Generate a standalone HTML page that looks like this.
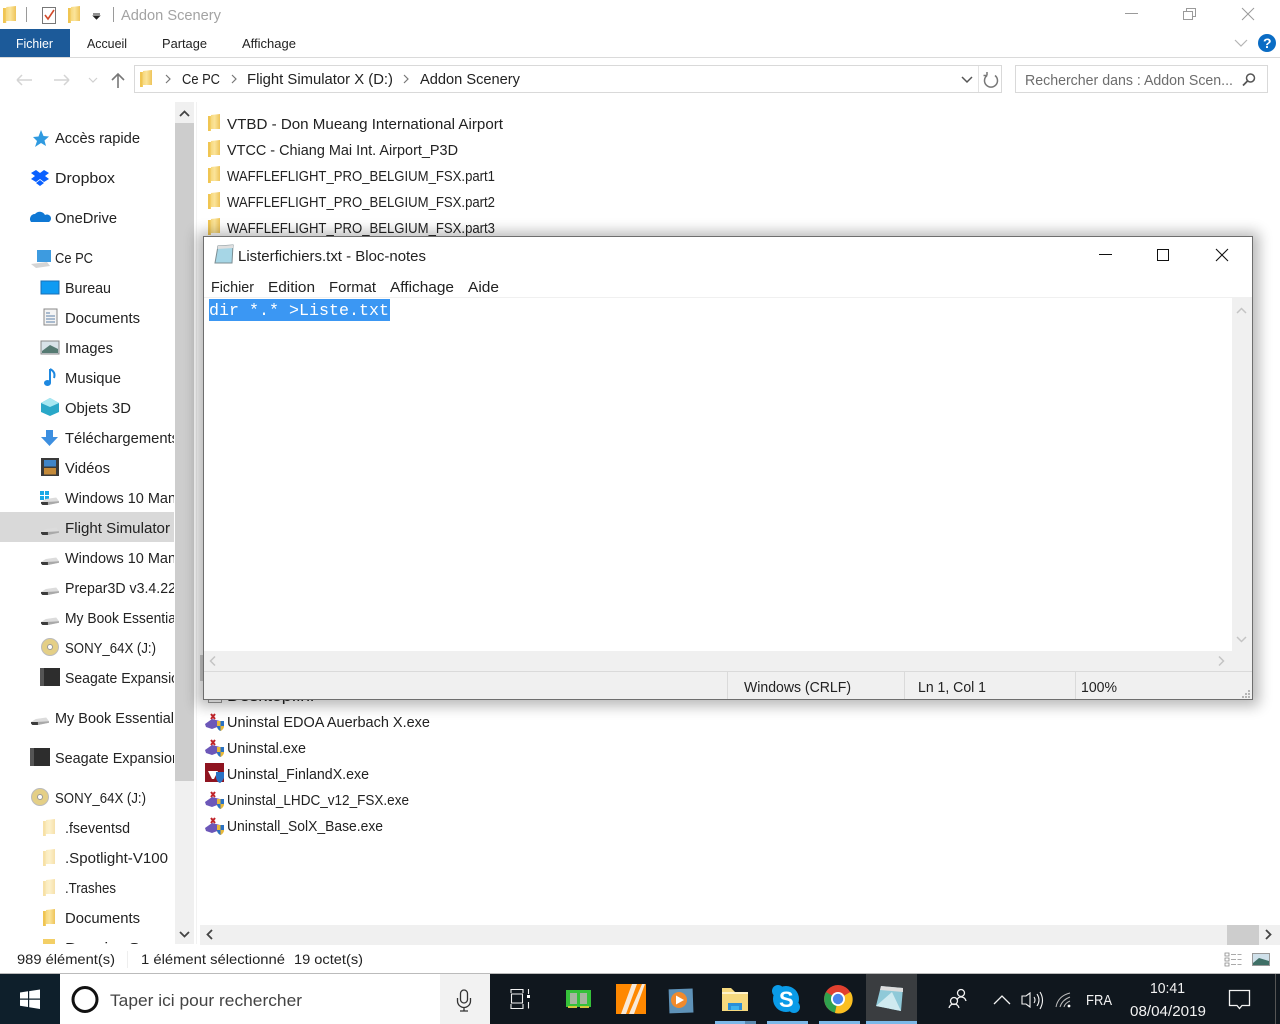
<!DOCTYPE html>
<html lang="fr"><head><meta charset="utf-8"><title>Addon Scenery</title>
<style>
html,body{margin:0;padding:0;background:#fff;width:1280px;height:1024px;overflow:hidden}
svg{display:block}
text{font-family:"Liberation Sans",sans-serif;font-size:14.5px;fill:#222}
.m{font-size:13px}
.w{fill:#f2f2f2}
</style></head><body>
<svg xmlns="http://www.w3.org/2000/svg" width="1280" height="1024" viewBox="0 0 1280 1024">
<defs>
<linearGradient id="fg" x1="0" x2="1" y1="0" y2="0"><stop offset="0" stop-color="#f3cf66"/><stop offset=".55" stop-color="#fbe49a"/><stop offset="1" stop-color="#eec45a"/></linearGradient>
<symbol id="folder" viewBox="0 0 12 17" preserveAspectRatio="none" overflow="visible"><path d="M0 2 L3 2 L3 1 L12 0 L12 15 L3 15 L3 17 L0 17Z" fill="url(#fg)"/><path d="M0 2 L2.500 2 L2.500 17 L0 17Z" fill="#f0c552"/></symbol>
<symbol id="drive" viewBox="0 0 26 12" preserveAspectRatio="none" overflow="visible"><path d="M0 8 L7 4 L22 2 L26 7 L26 9 L10 12 L2 12 L0 10Z" fill="#dcdcdc"/><path d="M7 8 L26 7 L26 9 L10 12Z" fill="#a9a9a9"/><path d="M0 8 L10 8 L10 12 L2 12 L0 10Z" fill="#3c3c3c"/></symbol>
<symbol id="unin" viewBox="0 0 20 18" overflow="visible"><path d="M0 11 L7 6 L15 8 L15 13 L7 16 L1 14Z" fill="#6c57b8"/><path d="M6 1 L10 6 M10 1 L6 6" stroke="#c0242a" stroke-width="2"/><path d="M12 8 L19 8 L19 14 Q18 17 15.500 18 Q13 17 12 14Z" fill="#e9b93a"/><path d="M15.500 8 L19 8 L19 13 L15.500 13Z M12 13 L15.500 13 L15.500 18 Q13 17 12 14Z" fill="#2a72c4"/></symbol>
<clipPath id="nav"><rect x="0" y="100" width="174" height="844"/></clipPath>
<filter id="sh" x="-5%" y="-5%" width="110%" height="110%"><feGaussianBlur stdDeviation="7"/></filter>
</defs>

<rect width="1280" height="1024" fill="#fff"/>

<!-- title bar -->
<use href="#folder" x="3" y="6" width="13" height="17"/>
<rect x="26" y="7" width="1" height="15" fill="#9a9a9a"/>
<path d="M42.500 7.500H55.500V23.500H42.500Z" fill="#fff" stroke="#777"/>
<path d="M45 15L48 19L54 10" fill="none" stroke="#d2492a" stroke-width="1.600"/>
<use href="#folder" x="68" y="6" width="12" height="17"/>
<path d="M93 14H100M93.500 16H99.500L96.500 19Z" stroke="#222" fill="#222"/>
<rect x="113" y="7" width="1" height="15" fill="#9a9a9a"/>
<text x="121" y="20" style="fill:#a3a3a3" textLength="100" lengthAdjust="spacingAndGlyphs">Addon Scenery</text>
<path d="M1125 13.500H1138" stroke="#9a9a9a"/>
<path d="M1183.500 11.500H1192.500V19.500H1183.500ZM1186.500 11.500V8.500H1195.500V16.500H1192.500" fill="none" stroke="#9a9a9a"/>
<path d="M1242 8L1254 20M1254 8L1242 20" stroke="#9a9a9a"/>

<!-- ribbon -->
<rect x="0" y="29" width="70" height="28" fill="#1c5a99"/>
<text class="m" x="16" y="48" style="fill:#fff" textLength="37" lengthAdjust="spacingAndGlyphs">Fichier</text>
<text class="m" x="87" y="48" textLength="40" lengthAdjust="spacingAndGlyphs">Accueil</text>
<text class="m" x="162" y="48" textLength="45" lengthAdjust="spacingAndGlyphs">Partage</text>
<text class="m" x="242" y="48" textLength="54" lengthAdjust="spacingAndGlyphs">Affichage</text>
<rect x="0" y="57" width="1280" height="1" fill="#dadada"/>
<path d="M1235 40L1241 46L1247 40" fill="none" stroke="#b5b5b5" stroke-width="1.200"/>
<circle cx="1267" cy="43" r="9" fill="#0a6cc4"/>
<text x="1263" y="48" style="fill:#fff;font-weight:bold;font-size:14px">?</text>

<!-- nav bar -->
<path d="M17 80H32M17 80L22 75M17 80L22 85" fill="none" stroke="#d4d4d4" stroke-width="1.500"/>
<path d="M54 80H69M69 80L64 75M69 80L64 85" fill="none" stroke="#d4d4d4" stroke-width="1.500"/>
<path d="M89 78L93 82L97 78" fill="none" stroke="#d0d0d0" stroke-width="1.200"/>
<path d="M118 88V74M112 80L118 74L124 80" fill="none" stroke="#777" stroke-width="1.600"/>
<rect x="134.500" y="65.500" width="867" height="27" fill="#fff" stroke="#d9d9d9"/>
<rect x="978" y="66" width="1" height="26" fill="#e3e3e3"/>
<use href="#folder" x="140" y="70" width="12" height="17"/>
<path d="M166 75L170 79L166 83M232 75L236 79L232 83M404 75L408 79L404 83" fill="none" stroke="#777" stroke-width="1.200"/>
<text x="182" y="84" style="font-size:15px" textLength="38" lengthAdjust="spacingAndGlyphs">Ce PC</text>
<text x="247" y="84" textLength="146" lengthAdjust="spacingAndGlyphs">Flight Simulator X (D:)</text>
<text x="420" y="84" textLength="100" lengthAdjust="spacingAndGlyphs">Addon Scenery</text>
<path d="M962 77L967 82L972 77" fill="none" stroke="#555" stroke-width="1.500"/>
<path d="M987 75.500A6.500 6.500 0 1 0 995 75.500M987 75.500V72M987 75.500H983.500" fill="none" stroke="#777" stroke-width="1.500"/>
<rect x="1015.500" y="65.500" width="252" height="27" fill="#fff" stroke="#d9d9d9"/>
<text x="1025" y="85" style="fill:#6d6d6d" textLength="208" lengthAdjust="spacingAndGlyphs">Rechercher dans : Addon Scen...</text>
<circle cx="1250.500" cy="78" r="4" fill="none" stroke="#555" stroke-width="1.500"/><path d="M1247.500 81L1243 85.500" stroke="#555" stroke-width="1.800"/>

<!-- sidebar -->
<rect x="0" y="512" width="174" height="30" fill="#d9d9d9"/>
<path d="M41 130L43.500 136L49 136.500L44.500 140.500L46 146L41 143L35 147L37 141L33 137L38.500 136.500Z" fill="#2f9ae0"/>
<path d="M31 173L36 170L40 173L44 170L49 173L45 176L49 179L44 182L40 179L36 182L31 179L35 176ZM36 183L40 180L44 183L40 186Z" fill="#0b61ff"/>
<path d="M31 222A5 5 0 0 1 35 214A6 6 0 0 1 45 215A4 4 0 0 1 49 222Z" fill="#0f78d4"/>
<path d="M37 250H51V262H37Z" fill="#3d9be0"/><path d="M31 264L47 262L50 266L36 268Z" fill="#d5d5d5"/>
<rect x="41" y="281" width="18" height="13" fill="#0f9bf2" stroke="#1a6fb5"/>
<rect x="44" y="309" width="13" height="16" fill="#f4f4f4" stroke="#888"/><path d="M46 313H50M46 316H55M46 319H55M46 322H55" stroke="#5b7fa8"/>
<rect x="41" y="341" width="18" height="13" fill="#d8e2e8" stroke="#888"/><path d="M42 351L50 345L58 349V353H42Z" fill="#557a72"/>
<path d="M50 369V383" stroke="#1e88e0" stroke-width="2"/><ellipse cx="47.500" cy="383" rx="3.500" ry="3" fill="#1e88e0"/><path d="M50 369Q56 372 54 378" fill="none" stroke="#1e88e0" stroke-width="2"/>
<path d="M50 398L59 403V412L50 416L41 412V403Z" fill="#29a8c8"/><path d="M41 403L50 398L59 403L50 407Z" fill="#a6e8f2"/>
<path d="M46 430H53V437H58L49.500 446L41 437H46Z" fill="#3d8fe0"/>
<rect x="41" y="458" width="18" height="18" fill="#3a3a3a"/><rect x="44" y="460" width="12" height="6.500" fill="#3f85c9"/><rect x="44" y="468" width="12" height="6.500" fill="#c48a3a"/>
<g fill="#19a9e6"><rect x="40" y="491" width="4" height="4"/><rect x="45" y="491" width="4" height="4"/><rect x="40" y="496" width="4" height="4"/><rect x="45" y="496" width="4" height="4"/></g>
<use href="#drive" x="41" y="496" width="18" height="9"/>
<use href="#drive" x="41" y="526" width="18" height="9"/>
<use href="#drive" x="41" y="556" width="18" height="9"/>
<use href="#drive" x="41" y="586" width="18" height="9"/>
<use href="#drive" x="41" y="616" width="18" height="9"/>
<circle cx="50" cy="647" r="8.500" fill="#e4cf86" stroke="#bbb"/><circle cx="50" cy="647" r="2.500" fill="#fff" stroke="#999"/>
<rect x="40" y="668" width="20" height="18" fill="#2d2d2d"/><rect x="40" y="668" width="4" height="18" fill="#555"/>
<use href="#drive" x="31" y="716" width="18" height="9"/>
<rect x="30" y="748" width="20" height="18" fill="#2d2d2d"/><rect x="30" y="748" width="4" height="18" fill="#555"/>
<circle cx="40" cy="797" r="8.500" fill="#e4cf86" stroke="#bbb"/><circle cx="40" cy="797" r="2.500" fill="#fff" stroke="#999"/>
<g opacity=".5"><use href="#folder" x="43" y="819" width="12" height="17"/><use href="#folder" x="43" y="849" width="12" height="17"/><use href="#folder" x="43" y="879" width="12" height="17"/></g>
<use href="#folder" x="43" y="909" width="12" height="17"/>
<rect x="43" y="939" width="12" height="5" fill="#f3cf66"/>

<g clip-path="url(#nav)">
<text x="55" y="143" textLength="85" lengthAdjust="spacingAndGlyphs">Accès rapide</text>
<text x="55" y="183" textLength="60" lengthAdjust="spacingAndGlyphs">Dropbox</text>
<text x="55" y="223" textLength="62" lengthAdjust="spacingAndGlyphs">OneDrive</text>
<text x="55" y="263" style="font-size:15px" textLength="38" lengthAdjust="spacingAndGlyphs">Ce PC</text>
<text x="65" y="293" textLength="46" lengthAdjust="spacingAndGlyphs">Bureau</text>
<text x="65" y="323" textLength="75" lengthAdjust="spacingAndGlyphs">Documents</text>
<text x="65" y="353" textLength="48" lengthAdjust="spacingAndGlyphs">Images</text>
<text x="65" y="383" textLength="56" lengthAdjust="spacingAndGlyphs">Musique</text>
<text x="65" y="413" textLength="66" lengthAdjust="spacingAndGlyphs">Objets 3D</text>
<text x="65" y="443" textLength="114" lengthAdjust="spacingAndGlyphs">Téléchargements</text>
<text x="65" y="473" textLength="45" lengthAdjust="spacingAndGlyphs">Vidéos</text>
<text x="65" y="503" textLength="111" lengthAdjust="spacingAndGlyphs">Windows 10 Man</text>
<text x="65" y="533" textLength="105" lengthAdjust="spacingAndGlyphs">Flight Simulator</text>
<text x="65" y="563" textLength="111" lengthAdjust="spacingAndGlyphs">Windows 10 Man</text>
<text x="65" y="593" textLength="111" lengthAdjust="spacingAndGlyphs">Prepar3D v3.4.22</text>
<text x="65" y="623" textLength="114" lengthAdjust="spacingAndGlyphs">My Book Essential</text>
<text x="65" y="653" textLength="91" lengthAdjust="spacingAndGlyphs">SONY_64X (J:)</text>
<text x="65" y="683" textLength="114" lengthAdjust="spacingAndGlyphs">Seagate Expansio</text>
<text x="55" y="723" textLength="119" lengthAdjust="spacingAndGlyphs">My Book Essential</text>
<text x="55" y="763" textLength="125" lengthAdjust="spacingAndGlyphs">Seagate Expansion</text>
<text x="55" y="803" textLength="91" lengthAdjust="spacingAndGlyphs">SONY_64X (J:)</text>
<text x="65" y="833" textLength="65" lengthAdjust="spacingAndGlyphs">.fseventsd</text>
<text x="65" y="863" textLength="103" lengthAdjust="spacingAndGlyphs">.Spotlight-V100</text>
<text x="65" y="893" textLength="51" lengthAdjust="spacingAndGlyphs">.Trashes</text>
<text x="65" y="923" textLength="75" lengthAdjust="spacingAndGlyphs">Documents</text>
<text x="65" y="953" textLength="75" lengthAdjust="spacingAndGlyphs">Dossier S</text>
</g>

<!-- sidebar scrollbar -->
<rect x="175" y="102" width="19" height="842" fill="#f0f0f0"/>
<rect x="175" y="123" width="19" height="658" fill="#cdcdcd"/>
<path d="M180 116L184.500 111.500L189 116M180 932L184.500 936.500L189 932" fill="none" stroke="#444" stroke-width="1.800"/>
<rect x="196" y="102" width="1" height="842" fill="#f2f2f2"/>

<!-- file list -->
<use href="#folder" x="208" y="114" width="12" height="17"/>
<use href="#folder" x="208" y="140" width="12" height="17"/>
<use href="#folder" x="208" y="166" width="12" height="17"/>
<use href="#folder" x="208" y="192" width="12" height="17"/>
<use href="#folder" x="208" y="218" width="12" height="17"/>
<text x="227" y="129" textLength="276" lengthAdjust="spacingAndGlyphs">VTBD - Don Mueang International Airport</text>
<text x="227" y="155" textLength="231" lengthAdjust="spacingAndGlyphs">VTCC - Chiang Mai Int. Airport_P3D</text>
<text x="227" y="181" style="font-size:15px" textLength="268" lengthAdjust="spacingAndGlyphs">WAFFLEFLIGHT_PRO_BELGIUM_FSX.part1</text>
<text x="227" y="207" style="font-size:15px" textLength="268" lengthAdjust="spacingAndGlyphs">WAFFLEFLIGHT_PRO_BELGIUM_FSX.part2</text>
<text x="227" y="233" style="font-size:15px" textLength="268" lengthAdjust="spacingAndGlyphs">WAFFLEFLIGHT_PRO_BELGIUM_FSX.part3</text>
<rect x="208.500" y="688.500" width="13" height="14" fill="#fff" stroke="#999"/>
<text x="227" y="701" textLength="87" lengthAdjust="spacingAndGlyphs">Desktop.ini</text>
<use href="#unin" x="205" y="713" width="20" height="18"/>
<use href="#unin" x="205" y="739" width="20" height="18"/>
<rect x="205" y="763" width="19" height="19" fill="#8f1420"/><path d="M208 771H218L214 779H212Z" fill="#fff"/><path d="M216 772L224 772L224 778Q222 782 220 783Q217 782 216 778Z" fill="#2a72c4"/>
<use href="#unin" x="205" y="791" width="20" height="18"/>
<use href="#unin" x="205" y="817" width="20" height="18"/>
<text x="227" y="727" textLength="203" lengthAdjust="spacingAndGlyphs">Uninstal EDOA Auerbach X.exe</text>
<text x="227" y="753" textLength="79" lengthAdjust="spacingAndGlyphs">Uninstal.exe</text>
<text x="227" y="779" textLength="142" lengthAdjust="spacingAndGlyphs">Uninstal_FinlandX.exe</text>
<text x="227" y="805" textLength="182" lengthAdjust="spacingAndGlyphs">Uninstal_LHDC_v12_FSX.exe</text>
<text x="227" y="831" textLength="156" lengthAdjust="spacingAndGlyphs">Uninstall_SolX_Base.exe</text>

<!-- horizontal scrollbar -->
<rect x="200" y="925" width="1080" height="20" fill="#f0f0f0"/>
<rect x="1227" y="925" width="32" height="20" fill="#cdcdcd"/>
<path d="M212 930L207.500 934.500L212 939M1266 930L1270.500 934.500L1266 939" fill="none" stroke="#444" stroke-width="1.800"/>

<!-- explorer status -->
<text class="m" x="17" y="964" style="font-size:14px" textLength="98" lengthAdjust="spacingAndGlyphs">989 élément(s)</text>
<rect x="127" y="951" width="1" height="17" fill="#eee"/>
<text class="m" x="141" y="964" style="font-size:14px" textLength="144" lengthAdjust="spacingAndGlyphs">1 élément sélectionné</text>
<text class="m" x="294" y="964" style="font-size:14px" textLength="69" lengthAdjust="spacingAndGlyphs">19 octet(s)</text>
<path d="M1225 953h4v3h-4zM1225 958h4v3h-4zM1225 963h4v3h-4z" fill="#fff" stroke="#888" stroke-width=".8"/>
<path d="M1231 954.500h5M1237.500 954.500h4M1231 959.500h5M1237.500 959.500h4M1231 964.500h5M1237.500 964.500h4" stroke="#aaa"/>
<rect x="1252.500" y="953.500" width="17" height="12" fill="#cfe0ea" stroke="#999"/><path d="M1253 963L1259 958L1269 961V965H1253Z" fill="#3f6f66"/>

<!-- notepad -->
<rect x="200" y="655" width="3" height="26" fill="#cdcdcd"/>
<rect x="197" y="232" width="1062" height="474" fill="#000" opacity=".28" filter="url(#sh)"/>
<rect x="203.500" y="236.500" width="1049" height="463" fill="#fff" stroke="#6e6e6e"/>
<path d="M218 246L233 245L232 263L215 263Z" fill="#a6d6e6" stroke="#7c8d92"/><path d="M218 246L233 245V248L217.500 249Z" fill="#dfdfdf"/>
<text x="238" y="261" textLength="188" lengthAdjust="spacingAndGlyphs">Listerfichiers.txt - Bloc-notes</text>
<path d="M1099 254.500H1112" stroke="#111"/>
<rect x="1157.500" y="249.500" width="11" height="11" fill="none" stroke="#111"/>
<path d="M1216 249L1228 261M1228 249L1216 261" stroke="#111" stroke-width="1.100"/>
<text x="211" y="292" textLength="43" lengthAdjust="spacingAndGlyphs">Fichier</text>
<text x="268" y="292" textLength="47" lengthAdjust="spacingAndGlyphs">Edition</text>
<text x="329" y="292" textLength="47" lengthAdjust="spacingAndGlyphs">Format</text>
<text x="390" y="292" textLength="64" lengthAdjust="spacingAndGlyphs">Affichage</text>
<text x="468" y="292" textLength="31" lengthAdjust="spacingAndGlyphs">Aide</text>
<rect x="204" y="297" width="1048" height="1" fill="#f0f0f0"/>
<rect x="209" y="299" width="181" height="22" fill="#3b97f3"/>
<text x="209" y="315" style="font-family:'Liberation Mono',monospace;font-size:17px;fill:#fff" textLength="180" lengthAdjust="spacingAndGlyphs">dir *.* &gt;Liste.txt</text>
<rect x="1232" y="298" width="20" height="353" fill="#f0f0f0"/>
<rect x="204" y="651" width="1048" height="48" fill="#f0f0f0"/>
<rect x="204" y="671" width="1048" height="1" fill="#dadada"/>
<path d="M1237 313L1241.500 308.500L1246 313M1237 637L1241.500 641.500L1246 637M215 656.500L210.500 661L215 665.500M1219 656.500L1223.500 661L1219 665.500" fill="none" stroke="#c4c4c4" stroke-width="1.500"/>
<rect x="727" y="672" width="1" height="27" fill="#dadada"/>
<rect x="904" y="672" width="1" height="27" fill="#dadada"/>
<rect x="1075" y="672" width="1" height="27" fill="#dadada"/>
<text x="744" y="692" textLength="107" lengthAdjust="spacingAndGlyphs">Windows (CRLF)</text>
<text x="918" y="692" textLength="68" lengthAdjust="spacingAndGlyphs">Ln 1, Col 1</text>
<text x="1081" y="692" textLength="36" lengthAdjust="spacingAndGlyphs">100%</text>
<path d="M1248 690h2v2h-2zM1245 693h2v2h-2zM1248 693h2v2h-2zM1242 696h2v2h-2zM1245 696h2v2h-2zM1248 696h2v2h-2z" fill="#b5b5b5"/>

<!-- taskbar -->
<rect x="0" y="973" width="1280" height="1" fill="#bbb"/>
<rect x="0" y="974" width="1280" height="50" fill="#10171e"/>
<rect x="0" y="974" width="60" height="50" fill="#0e1f2b"/>
<path d="M20 992.500L28 991.300V998.500H20ZM29.200 991.100L40 989.500V998.500H29.200ZM20 999.800H28V1007L20 1005.800ZM29.200 999.800H40V1009L29.200 1007.200Z" fill="#fff"/>
<rect x="60" y="974" width="380" height="50" fill="#fff"/>
<rect x="440" y="974" width="50" height="50" fill="#f2f2f2"/>
<circle cx="85" cy="999.500" r="12" fill="none" stroke="#111" stroke-width="3"/>
<text x="110" y="1006" style="font-size:17px;fill:#444" textLength="192" lengthAdjust="spacingAndGlyphs">Taper ici pour rechercher</text>
<rect x="460.500" y="990" width="7" height="13" rx="3.500" fill="none" stroke="#333" stroke-width="1.300"/><path d="M457.500 998V1001A6.500 6.500 0 0 0 470.500 1001V998M464 1008V1011M460 1011H468" fill="none" stroke="#333" stroke-width="1.300"/>
<path d="M511 993V989.500H523V993M511.500 994H522.500V1003H511.500ZM511 1004V1008.500H523V1004M528.500 989V994M528.500 1002V1008.500" fill="none" stroke="#f2f2f2" stroke-width="1.100"/><rect x="527" y="995" width="3" height="3" fill="#fff"/>
<rect x="566" y="990" width="25" height="17" fill="#36c13a"/><rect x="570" y="993" width="7" height="11" fill="#a7b5a0"/><rect x="580" y="993" width="7" height="11" fill="#a7b5a0"/><rect x="568" y="1006" width="9" height="2" fill="#d4c93e"/><rect x="580" y="1006" width="9" height="2" fill="#d4c93e"/>
<rect x="616" y="984" width="30" height="30" fill="#ff8800"/><path d="M632 984H637L626 1014H621ZM642 984H645L634 1014H629Z" fill="#f8e9d8"/>
<rect x="669" y="989" width="24" height="24" fill="#5e92b8" transform="rotate(-2 680 1000)"/><circle cx="679" cy="1000" r="8" fill="#f08a2c"/><path d="M676 995.500L684 1000L676 1004.500Z" fill="#fff"/>
<path d="M722 988H731L735 992H748V1011H722Z" fill="#f6d97e"/><rect x="722" y="992" width="26" height="2" fill="#fff3c9"/><path d="M728 1003H742V1010H739V1006H731V1010H728Z" fill="#2b8fd8"/><rect x="731" y="1006" width="8" height="4" fill="#3fb2ee"/>
<circle cx="786" cy="999" r="13" fill="#0a9be8"/><circle cx="778" cy="991" r="6" fill="#0a9be8"/><circle cx="794" cy="1007" r="6" fill="#0a9be8"/>
<text x="779" y="1007" style="font-size:22px;font-weight:bold;fill:#fff">S</text>
<circle cx="838" cy="999" r="14" fill="#e1402f"/>
<path d="M838 999L826 992A14 14 0 0 0 835 1012.700Z" fill="#2fa14d"/>
<path d="M838 999L835 1013A14 14 0 0 0 850.500 992Z" fill="#fbbf21"/>
<circle cx="838" cy="999" r="7" fill="#fff"/><circle cx="838" cy="999" r="5.200" fill="#4a86ec"/>
<rect x="866" y="974" width="51" height="50" fill="#3a3d40"/>
<path d="M881 986L903 988L901 1011L876 1006Z" fill="#8fc9d8"/><path d="M881 986L903 988V992L880 990Z" fill="#dcdcdc"/><path d="M876 1006L892 992L901 1011Z" fill="#cfeaf0"/>
<rect x="715" y="1021" width="30" height="3" fill="#7cb8e8"/><rect x="745" y="1021" width="11" height="3" fill="#5a8ab0"/>
<rect x="767" y="1021" width="41" height="3" fill="#7cb8e8"/>
<rect x="819" y="1021" width="41" height="3" fill="#7cb8e8"/>
<rect x="866" y="1021" width="51" height="3" fill="#7cb8e8"/>

<!-- tray -->
<g fill="none" stroke="#f2f2f2" stroke-width="1.300">
<circle cx="954" cy="1001" r="3.500"/><path d="M949 1008Q950 1004 954 1004Q958 1004 959 1008"/>
<circle cx="961" cy="993" r="3.500"/><path d="M957 1000Q958 997 961 997Q965 997 966 1001"/>
<path d="M994 1004L1002 996L1010 1004"/>
<path d="M1022 996H1026L1030 993V1007L1026 1004H1022ZM1034 997Q1036 1000 1034 1003M1037 994Q1041 1000 1037 1006M1040 992Q1045 1000 1040 1009" stroke-width="1.100"/>
<path d="M1056 1007Q1058 996 1070 993M1060 1007Q1062 1000 1070 997M1064 1007Q1065 1003 1070 1001" stroke="#bbb" stroke-width="1"/>
<path d="M1229.500 990.500H1249.500V1005.500H1242L1239.500 1008.500L1237 1005.500H1229.500Z"/>
</g>
<circle cx="1069" cy="1006" r="1.400" fill="#fff"/>
<text x="1086" y="1005" class="w" style="font-size:14.500px;fill:#f2f2f2" textLength="26" lengthAdjust="spacingAndGlyphs">FRA</text>
<text x="1150" y="993" style="font-size:14.500px;fill:#f2f2f2" textLength="35" lengthAdjust="spacingAndGlyphs">10:41</text>
<text x="1130" y="1016" style="font-size:14.500px;fill:#f2f2f2" textLength="76" lengthAdjust="spacingAndGlyphs">08/04/2019</text>
<rect x="1275" y="974" width="1" height="50" fill="#555"/>
</svg>
</body></html>
